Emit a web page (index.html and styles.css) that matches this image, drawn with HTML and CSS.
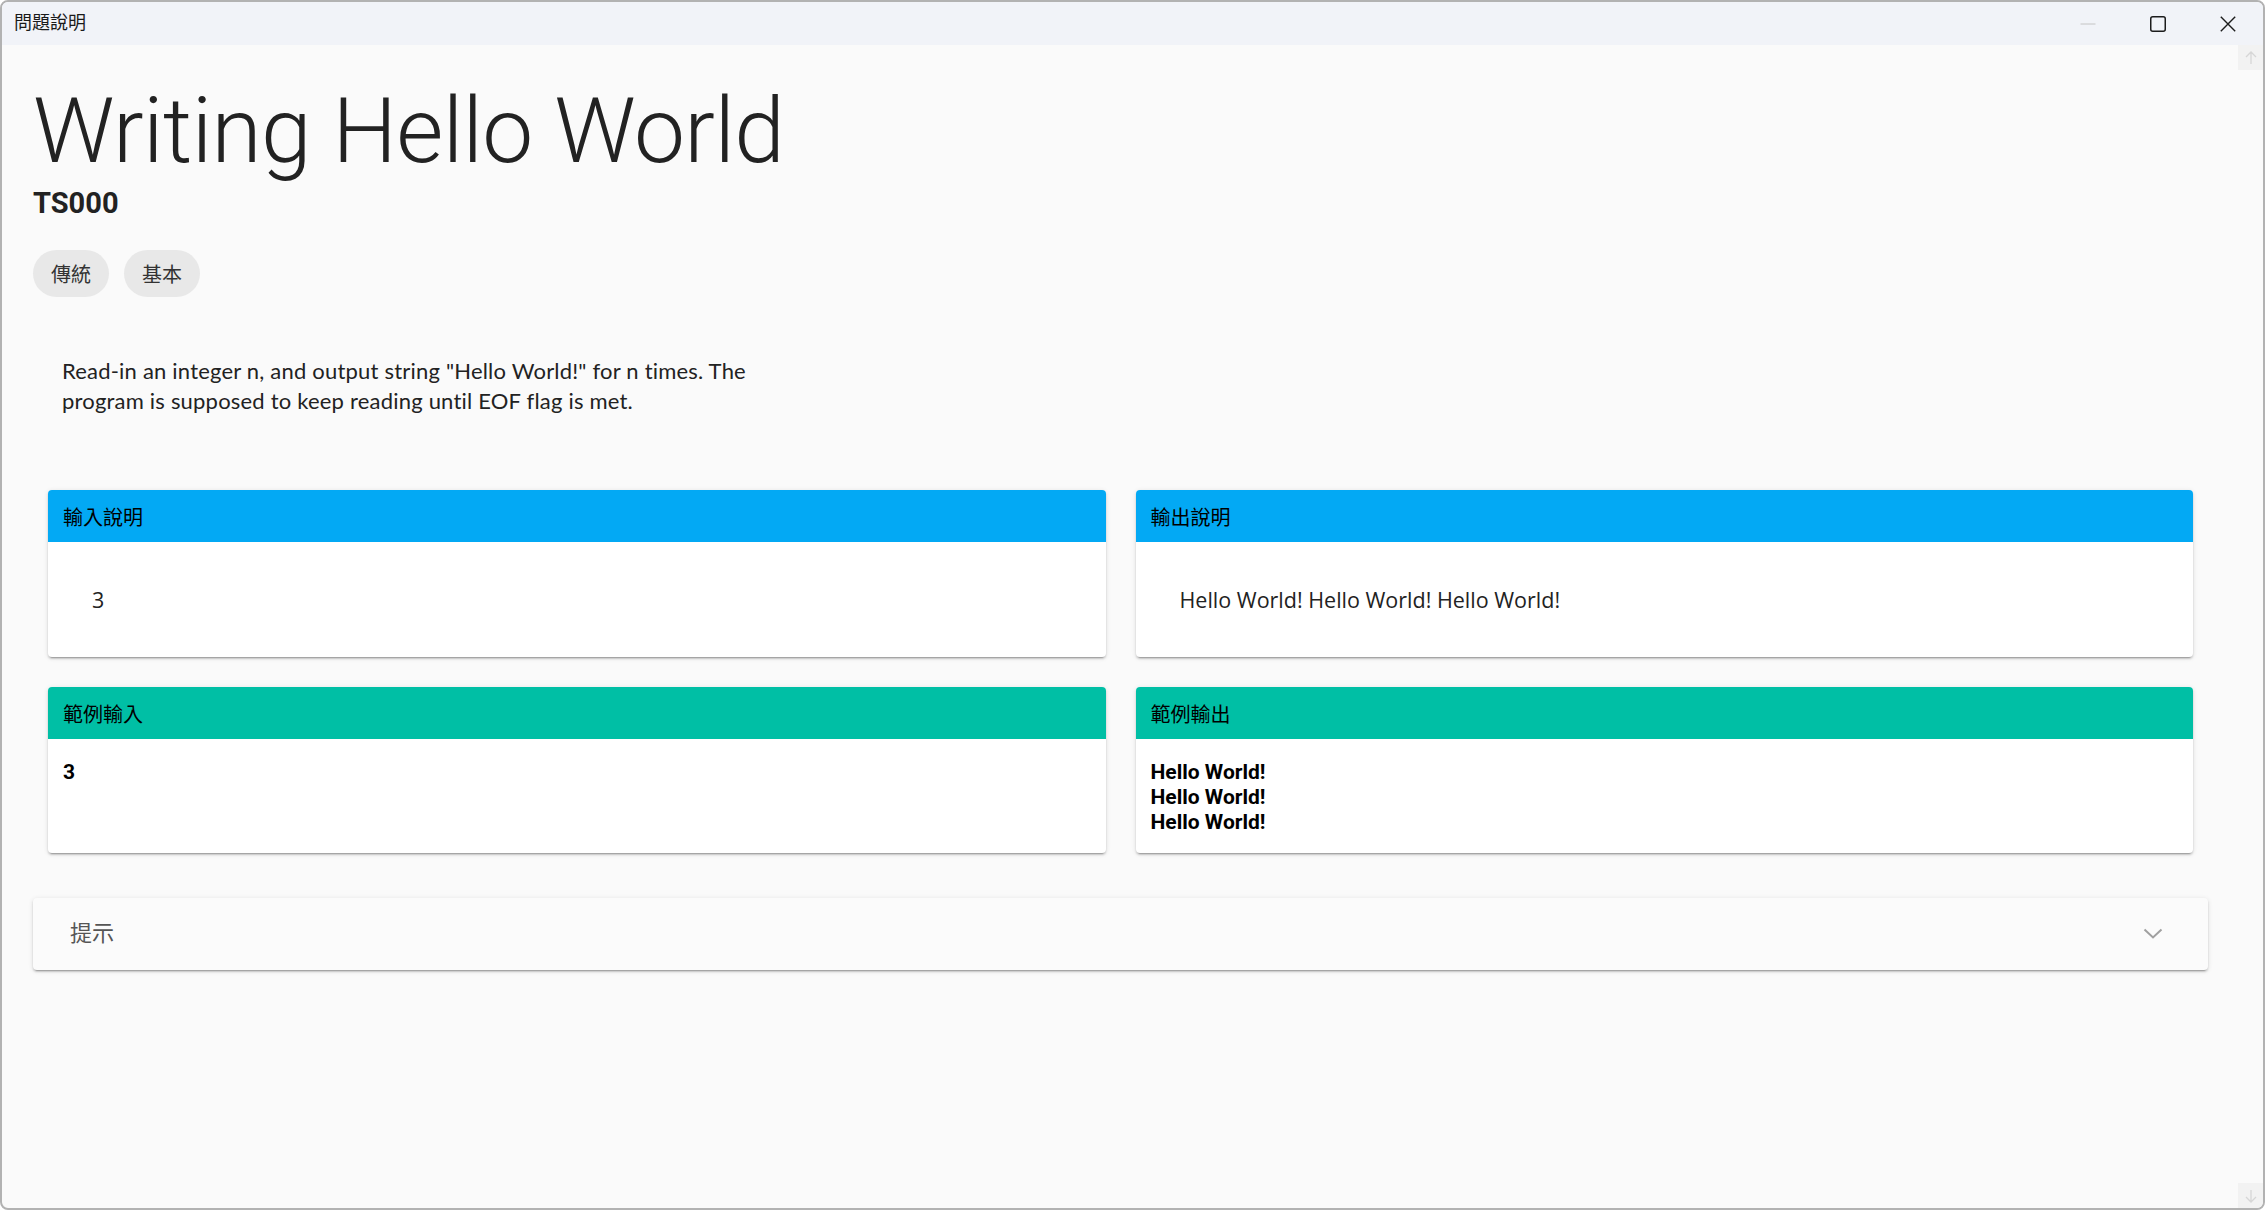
FILE: index.html
```html
<!DOCTYPE html>
<html lang="zh-Hant">
<head>
<meta charset="utf-8">
<title>問題說明</title>
<link rel="stylesheet" href="styles.css">
</head>
<body>
<div class="window">
  <div class="titlebar">
    <div class="wintitle">問題說明</div>
    <div class="controls">
      <div class="ctl"><svg width="16" height="16" viewBox="0 0 16 16"><line x1="0.5" y1="8" x2="15.5" y2="8" stroke="#c4c4c4" stroke-width="1"/></svg></div>
      <div class="ctl"><svg width="16" height="16" viewBox="0 0 16 16"><rect x="0.75" y="0.75" width="14.5" height="14.5" rx="2" fill="none" stroke="#1c1c1c" stroke-width="1.5"/></svg></div>
      <div class="ctl"><svg width="16" height="16" viewBox="0 0 16 16"><path d="M0.8 0.8 L15.2 15.2 M15.2 0.8 L0.8 15.2" stroke="#1c1c1c" stroke-width="1.4" fill="none"/></svg></div>
    </div>
  </div>
  <div class="main">
    <div class="content">
      <h1 class="title">Writing Hello World</h1>
      <div class="code">TS000</div>
      <div class="chips">
        <span class="chip">傳統</span>
        <span class="chip">基本</span>
      </div>
      <div class="desc">Read-in an integer n, and output string "Hello World!" for n times. The program is supposed to keep reading until EOF flag is met.</div>
      <div class="grid">
        <div class="card">
          <div class="card-head blue">輸入說明</div>
          <div class="card-body"><div class="md">3</div></div>
        </div>
        <div class="card">
          <div class="card-head blue">輸出說明</div>
          <div class="card-body"><div class="md">Hello World! Hello World! Hello World!</div></div>
        </div>
        <div class="card">
          <div class="card-head green">範例輸入</div>
          <div class="card-body sample"><div class="pre">3</div></div>
        </div>
        <div class="card">
          <div class="card-head green">範例輸出</div>
          <div class="card-body sample"><div class="pre">Hello World!<br>Hello World!<br>Hello World!</div></div>
        </div>
      </div>
      <div class="hint">
        <span class="hint-title">提示</span>
        <svg class="chev" width="20" height="12" viewBox="0 0 20 12"><polyline points="1.5,1.5 10,9.5 18.5,1.5" fill="none" stroke="#a0a0a0" stroke-width="2"/></svg>
      </div>
    </div>
    <div class="scrollbar">
      <div class="sbtn"><svg width="12" height="14" viewBox="0 0 12 14"><path d="M6 1 L6 13 M1 6 L6 1 L11 6" fill="none" stroke="#d6d6d6" stroke-width="1.3"/></svg></div>
      <div class="sbtn"><svg width="12" height="14" viewBox="0 0 12 14"><path d="M6 1 L6 13 M1 8 L6 13 L11 8" fill="none" stroke="#d6d6d6" stroke-width="1.3"/></svg></div>
    </div>
  </div>
</div>
</body>
</html>
```
FILE: styles.css
```css
html, body {
  margin: 0;
  padding: 0;
  background: #ffffff;
}
body {
  font-family: "Noto Sans CJK TC", "Noto Sans", sans-serif;
  color: #222;
}
.window {
  box-sizing: border-box;
  width: 2265px;
  height: 1210px;
  border: 2px solid #b2b2b2;
  border-radius: 8px;
  overflow: hidden;
  display: flex;
  flex-direction: column;
  background: #fafafa;
}
.titlebar {
  height: 43px;
  flex: none;
  background: #f1f3f8;
  display: flex;
  align-items: center;
  justify-content: space-between;
}
.wintitle {
  padding-left: 12px;
  margin-bottom: 5px;
  font-family: "Noto Sans CJK TC", sans-serif;
  font-size: 18px;
  color: #1a1a1a;
  line-height: 1;
}
.controls {
  display: flex;
  height: 100%;
}
.ctl {
  width: 70px;
  height: 100%;
  display: flex;
  align-items: center;
  justify-content: center;
}
.main {
  flex: 1;
  display: flex;
  min-height: 0;
}
.content {
  flex: 1;
  padding: 40px 30px 0 31px;
  min-width: 0;
}
.title {
  margin: 0;
  font-family: Roboto, sans-serif;
  font-weight: 300;
  font-size: 91px;
  line-height: 92px;
  letter-spacing: -0.6px;
  color: #222;
}
.code {
  margin-top: 10px;
  font-family: Roboto, sans-serif;
  font-weight: 700;
  font-size: 29px;
  line-height: 32px;
  color: #222;
}
.chips {
  margin-top: 31px;
  display: flex;
  gap: 15px;
}
.chip {
  height: 47px;
  padding: 0 18px;
  border-radius: 24px;
  background: #e8e8e8;
  display: flex;
  align-items: center;
  font-size: 20px;
  color: #333;
}
.desc {
  margin-top: 59px;
  padding: 0 29px;
  max-width: 725px;
  font-family: Lato, "Noto Sans CJK TC", sans-serif;
  font-size: 22px;
  letter-spacing: 0.2px;
  line-height: 30px;
  color: #222;
}
.grid {
  margin-top: 74px;
  padding: 0 15px;
  display: grid;
  grid-template-columns: 1fr 1fr;
  gap: 30px;
}
.card {
  background: #fff;
  border-radius: 4px;
  overflow: hidden;
  box-shadow: 0 3px 1px -2px rgba(0,0,0,.2), 0 2px 2px 0 rgba(0,0,0,.14), 0 1px 5px 0 rgba(0,0,0,.12);
  display: flex;
  flex-direction: column;
}
.card-head {
  height: 52px;
  padding: 0 15px;
  display: flex;
  align-items: center;
  font-size: 20px;
  color: #000;
}
.blue { background: #03a9f4; }
.green { background: #00bfa5; }
.card-body {
  flex: 1;
  padding: 15px;
}
.md {
  padding: 29px;
  font-family: "Open Sans", "Noto Sans CJK TC", sans-serif;
  font-size: 21.5px;
  line-height: 27px;
  color: #222;
}
.card-body.sample {
  padding: 21px 15px 18px;
}
.pre {
  font-family: Roboto, sans-serif;
  font-weight: 700;
  font-size: 21px;
  line-height: 25px;
  color: #000;
}
.hint {
  margin-top: 45px;
  height: 72px;
  box-sizing: border-box;
  padding: 0 45px 0 37px;
  background: #fbfbfb;
  border-radius: 4px;
  box-shadow: 0 3px 1px -2px rgba(0,0,0,.2), 0 2px 2px 0 rgba(0,0,0,.14), 0 1px 5px 0 rgba(0,0,0,.12);
  display: flex;
  align-items: center;
  justify-content: space-between;
}
.hint-title {
  font-size: 22px;
  line-height: 22px;
  margin-bottom: 7px;
  color: #555;
}
.scrollbar {
  width: 25px;
  flex: none;
  display: flex;
  flex-direction: column;
  justify-content: space-between;
}
.sbtn {
  height: 25px;
  background: #f2f2f2;
  display: flex;
  align-items: center;
  justify-content: center;
}
```
